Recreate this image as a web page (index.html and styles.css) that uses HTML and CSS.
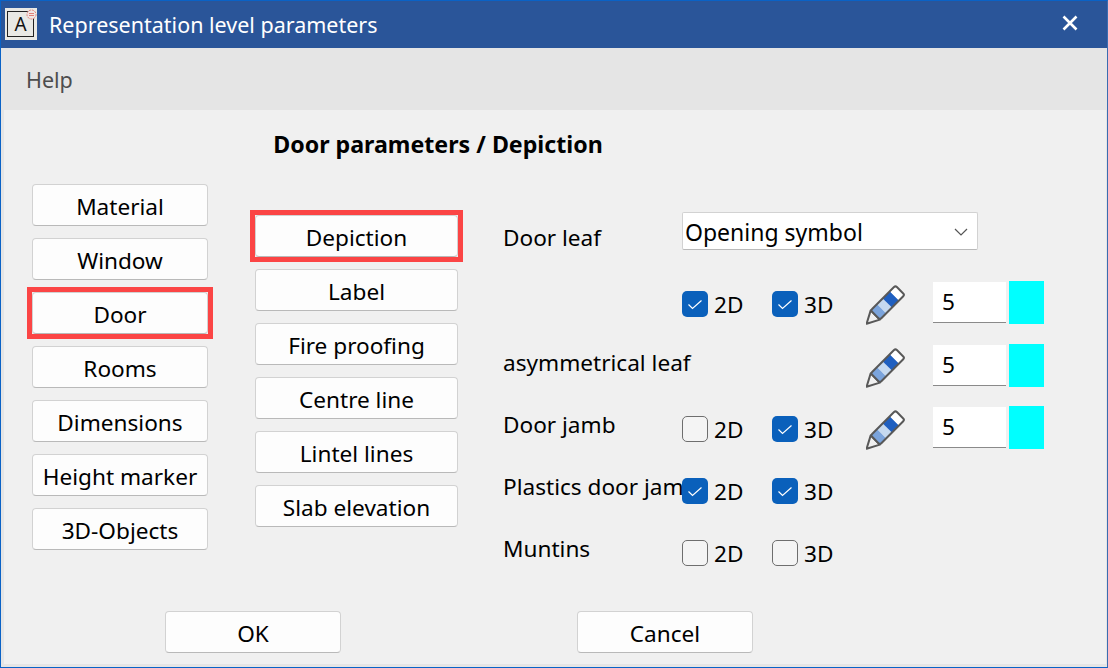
FILE: index.html
```html
<!DOCTYPE html>
<html lang="en">
<head>
<meta charset="utf-8">
<title>Representation level parameters</title>
<link rel="stylesheet" href="styles.css">
</head>
<body>
<svg class="defs" width="0" height="0" aria-hidden="true">
  <symbol id="pencil" viewBox="0 0 40 40">
    <g transform="translate(9.3 31.5) rotate(-45)">
      <path d="M0 -6.5 L-12.3 0 L0 6.5 Z" fill="#f0f0f0" stroke="#585858" stroke-width="2" stroke-linejoin="round"/>
      <rect x="0" y="-6.5" width="9" height="13" fill="#7ba4dc"/>
      <rect x="9" y="-6.5" width="8" height="13" fill="#c5d9f0"/>
      <rect x="17" y="-6.5" width="10" height="13" fill="#1f5fc0"/>
      <rect x="27" y="-6.5" width="8" height="13" fill="#ffffff"/>
      <rect x="0" y="-6.5" width="35" height="13" rx="2" fill="none" stroke="#585858" stroke-width="2"/>
    </g>
  </symbol>
  <symbol id="tick" viewBox="0 0 26 26">
    <path d="M6.5 13.5 L10.5 17.5 L19.5 9.5" fill="none" stroke="#fff" stroke-width="1.2"/>
  </symbol>
</svg>
<div class="window">
  <header class="titlebar">
    <div class="app-icon">
      <span class="app-letter">A</span>
      <svg class="app-badge" width="11" height="11" viewBox="0 0 11 11"><circle cx="5.5" cy="5.5" r="4.5" fill="#f1e6e4" stroke="#e28078" stroke-dasharray="2 1"/><path d="M3 4.5h5M3 6.5h5" stroke="#e28078"/></svg>
    </div>
    <div class="title">Representation level parameters</div>
    <svg class="close" width="16" height="16" viewBox="0 0 16 16"><path d="M1.5 1.5 L14.5 14.5 M14.5 1.5 L1.5 14.5" stroke="#fff" stroke-width="2.6"/></svg>
  </header>
  <nav class="menubar"><span class="menu-item">Help</span></nav>
  <main class="content">
    <h1 class="heading">Door parameters / Depiction</h1>
    <div class="columns">
      <div class="col-main">
        <button class="btn">Material</button>
        <button class="btn">Window</button>
        <button class="btn marked">Door</button>
        <button class="btn">Rooms</button>
        <button class="btn">Dimensions</button>
        <button class="btn">Height marker</button>
        <button class="btn">3D-Objects</button>
      </div>
      <div class="col-sub">
        <button class="btn marked">Depiction</button>
        <button class="btn">Label</button>
        <button class="btn">Fire proofing</button>
        <button class="btn">Centre line</button>
        <button class="btn">Lintel lines</button>
        <button class="btn">Slab elevation</button>
      </div>
      <div class="form">
        <div class="lbl lbl-first">Door leaf</div>
        <div class="select"><span>Opening symbol</span>
          <svg width="14" height="8" viewBox="0 0 14 8"><path d="M1 1 L7 7 L13 1" fill="none" stroke="#555" stroke-width="1.2"/></svg>
        </div>

        <div class="lbl"></div>
        <div class="chk on"><span class="box"><svg width="26" height="26"><use href="#tick"/></svg></span>2D</div>
        <div class="chk on"><span class="box"><svg width="26" height="26"><use href="#tick"/></svg></span>3D</div>
        <svg class="pen" width="40" height="41"><use href="#pencil"/></svg>
        <div class="num">5</div>
        <div class="swatch"></div>

        <div class="lbl lbl-wide">asymmetrical leaf</div>
        <div></div>
        <svg class="pen" width="40" height="41"><use href="#pencil"/></svg>
        <div class="num">5</div>
        <div class="swatch"></div>

        <div class="lbl">Door jamb</div>
        <div class="chk"><span class="box"></span>2D</div>
        <div class="chk on"><span class="box"><svg width="26" height="26"><use href="#tick"/></svg></span>3D</div>
        <svg class="pen" width="40" height="41"><use href="#pencil"/></svg>
        <div class="num">5</div>
        <div class="swatch"></div>

        <div class="lbl">Plastics door jamb</div>
        <div class="chk on"><span class="box"><svg width="26" height="26"><use href="#tick"/></svg></span>2D</div>
        <div class="chk on"><span class="box"><svg width="26" height="26"><use href="#tick"/></svg></span>3D</div>
        <div></div><div></div><div></div>

        <div class="lbl">Muntins</div>
        <div class="chk"><span class="box"></span>2D</div>
        <div class="chk"><span class="box"></span>3D</div>
      </div>
    </div>
    <footer class="actions">
      <button class="btn">OK</button>
      <button class="btn">Cancel</button>
    </footer>
  </main>
</div>
</body>
</html>
```
FILE: styles.css
```css
* { box-sizing: border-box; }
html, body { margin: 0; padding: 0; }
body {
  width: 1108px;
  height: 668px;
  overflow: hidden;
  font-family: "Noto Sans", "Open Sans", sans-serif;
  font-size: 23px;
  color: #000;
}
.defs { display: block; height: 0; }
.window {
  width: 1108px;
  height: 668px;
  border: 1px solid #0a62c6;
  border-right-color: #3a6cb0;
  display: flex;
  flex-direction: column;
  background: #e5e5e5;
}
.titlebar {
  height: 47px;
  flex: none;
  background: #2a5599;
  color: #fff;
  display: flex;
  align-items: center;
  padding-left: 4px;
}
.app-icon {
  position: relative;
  width: 32px;
  height: 32px;
  margin-top: -1px;
  background: #e9e9e5;
  padding: 3px 3px 3px 2px;
  flex: none;
}
.app-letter {
  display: flex;
  width: 27px;
  height: 26px;
  border: 1.5px solid #222;
  align-items: center;
  justify-content: center;
  color: #111;
  font-size: 19px;
  line-height: 1;
}
.app-badge {
  position: absolute;
  top: 1px;
  right: 0;
}
.title {
  margin-left: 12px;
  font-size: 21.5px;
  flex: 1;
  line-height: 47px;
}
.close { margin-right: 29px; margin-top: -4px; }
.menubar {
  height: 62px;
  flex: none;
  display: flex;
  align-items: center;
  padding-left: 25px;
  background: #e5e5e5;
}
.menu-item { color: #4d4d4d; font-size: 21.5px; }
.content {
  flex: 1;
  margin: 0 1px 3px 3px;
  background: #f0f0f0;
  display: flex;
  flex-direction: column;
}
.heading {
  margin: 0;
  height: 74px;
  padding-top: 17px;
  font-size: 23.2px;
  line-height: 34px;
  font-weight: 700;
  text-align: center;
  width: 868px;
}
.columns {
  display: flex;
  height: 427px;
}
.col-main, .col-sub {
  display: flex;
  flex-direction: column;
  gap: 12px;
}
.col-main { margin-left: 28px; width: 176px; }
.col-sub { margin-left: 47px; width: 203px; margin-top: 31px; }
.btn {
  position: relative;
  display: block;
  width: 100%;
  height: 42px;
  padding: 2px 0 0;
  background: #fdfdfd;
  border: 1px solid #d2d2d2;
  border-bottom-color: #b9b9b9;
  border-radius: 4px;
  font: inherit;
  font-size: 22.6px;
  color: #000;
  white-space: nowrap;
}
.marked::after {
  content: "";
  position: absolute;
  inset: -6px;
  border: 5px solid #fb4545;
}
.form {
  margin-left: 45px;
  margin-top: 28px;
  display: grid;
  grid-template-columns: 179px 90px 94px 67px 76px 35px;
  grid-template-rows: 69px 63px 62px 62px 62px 43px;
  height: 363px;
  font-size: 22.6px;
}
.form > * { height: 43px; }
.lbl {
  white-space: nowrap;
  display: flex;
  align-items: center;
  padding-bottom: 7px;
}
.lbl-first { padding: 7px 0 0; }
.lbl-wide { grid-column: 1 / span 2; }
.select {
  grid-column: 2 / span 5;
  width: 296px;
  height: 38px;
  background: #fff;
  border: 1px solid #d2d2d2;
  border-bottom-color: #b9b9b9;
  border-radius: 2px;
  padding: 1px 9px 0 2px;
  display: flex;
  align-items: center;
  justify-content: space-between;
  font-size: 23px;
}
.chk {
  display: flex;
  align-items: center;
  gap: 6px;
  padding-top: 3px;
}
.box {
  width: 26px;
  height: 26px;
  border-radius: 5px;
  border: 1.5px solid #6e6e6e;
  background: #f4f4f4;
  flex: none;
}
.box svg { display: block; }
.chk.on .box { background: #0a60bb; border: 0; }
.pen { display: block; margin-top: 1px; }
.num {
  width: 73px;
  height: 41px;
  margin-top: 1px;
  background: #fff;
  border-bottom: 1px solid #8a8a8a;
  padding-left: 9px;
  line-height: 40px;
}
.swatch { background: #0ff; width: 35px; }
.actions {
  display: flex;
  gap: 236px;
  padding-left: 161px;
}
.actions .btn { width: 176px; }
```
